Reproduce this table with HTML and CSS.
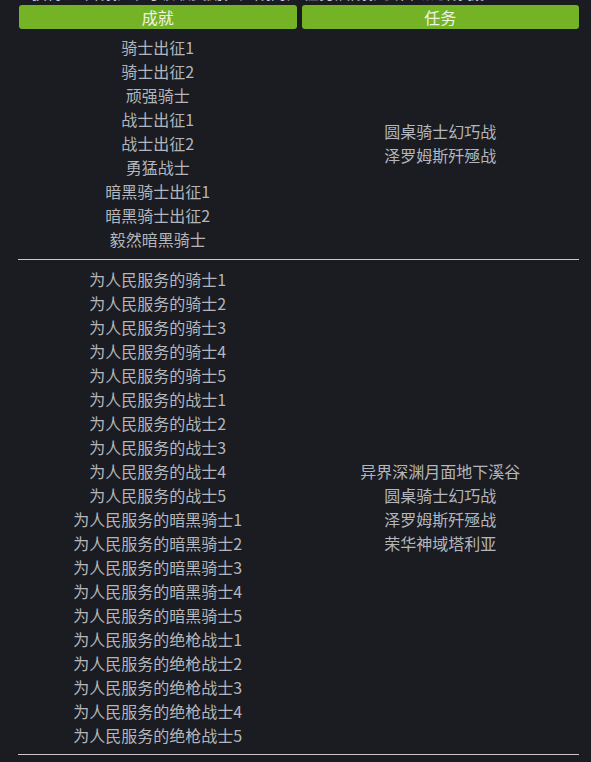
FILE: index.html
```html
<!DOCTYPE html>
<html lang="zh">
<head>
<meta charset="utf-8">
<link rel="stylesheet" href="styles.css">
</head>
<body>
<div class="page">
  <p class="cut">获得以下成就即可领取奖励，完成对应任务后成就会自动达成哦。</p>
  <div class="table">
    <div class="head">
      <div class="th">成就</div>
      <div class="th">任务</div>
    </div>
    <div class="row first">
      <div class="cell">
        <div>骑士出征1</div><div>骑士出征2</div><div>顽强骑士</div><div>战士出征1</div><div>战士出征2</div><div>勇猛战士</div><div>暗黑骑士出征1</div><div>暗黑骑士出征2</div><div>毅然暗黑骑士</div>
      </div>
      <div class="cell">
        <div>圆桌骑士幻巧战</div><div>泽罗姆斯歼殛战</div>
      </div>
    </div>
    <div class="row">
      <div class="cell">
        <div>为人民服务的骑士1</div><div>为人民服务的骑士2</div><div>为人民服务的骑士3</div><div>为人民服务的骑士4</div><div>为人民服务的骑士5</div>
        <div>为人民服务的战士1</div><div>为人民服务的战士2</div><div>为人民服务的战士3</div><div>为人民服务的战士4</div><div>为人民服务的战士5</div>
        <div>为人民服务的暗黑骑士1</div><div>为人民服务的暗黑骑士2</div><div>为人民服务的暗黑骑士3</div><div>为人民服务的暗黑骑士4</div><div>为人民服务的暗黑骑士5</div>
        <div>为人民服务的绝枪战士1</div><div>为人民服务的绝枪战士2</div><div>为人民服务的绝枪战士3</div><div>为人民服务的绝枪战士4</div><div>为人民服务的绝枪战士5</div>
      </div>
      <div class="cell">
        <div>异界深渊月面地下溪谷</div><div>圆桌骑士幻巧战</div><div>泽罗姆斯歼殛战</div><div>荣华神域塔利亚</div>
      </div>
    </div>
  </div>
</div>
</body>
</html>
```
FILE: styles.css
```css
html, body {
  margin: 0;
  padding: 0;
  background: #1b1c21;
}
body {
  font-family: "Microsoft YaHei", "Noto Sans CJK SC", "Noto Sans", sans-serif;
  font-size: 16px;
  color: #b3b6bd;
  overflow: hidden;
}
.page {
  padding: 0 12px 0 19px;
}
.cut {
  margin: -18px 0 0 12px;
  line-height: 20px;
  height: 20px;
  color: #c8ccd2;
  font-size: 16px;
  white-space: nowrap;
  overflow: hidden;
}
.table {
  width: 560px;
  margin-top: 3px;
}
.head {
  display: grid;
  grid-template-columns: 1fr 1fr;
  column-gap: 5px;
}
.th {
  background: #74b226;
  color: #eef5e4;
  border-radius: 3px;
  height: 24px;
  line-height: 24px;
  text-align: center;
}
.row {
  display: grid;
  grid-template-columns: 1fr 1fr;
  column-gap: 5px;
  padding: 7px 0;
  border-bottom: 1px solid #c9c9cc;
  margin-left: -1px;
  padding-left: 1px;
}
.row.first {
  padding-top: 6px;
  padding-bottom: 8px;
}
.cell {
  display: flex;
  flex-direction: column;
  justify-content: center;
  text-align: center;
  line-height: 24px;
}
```
